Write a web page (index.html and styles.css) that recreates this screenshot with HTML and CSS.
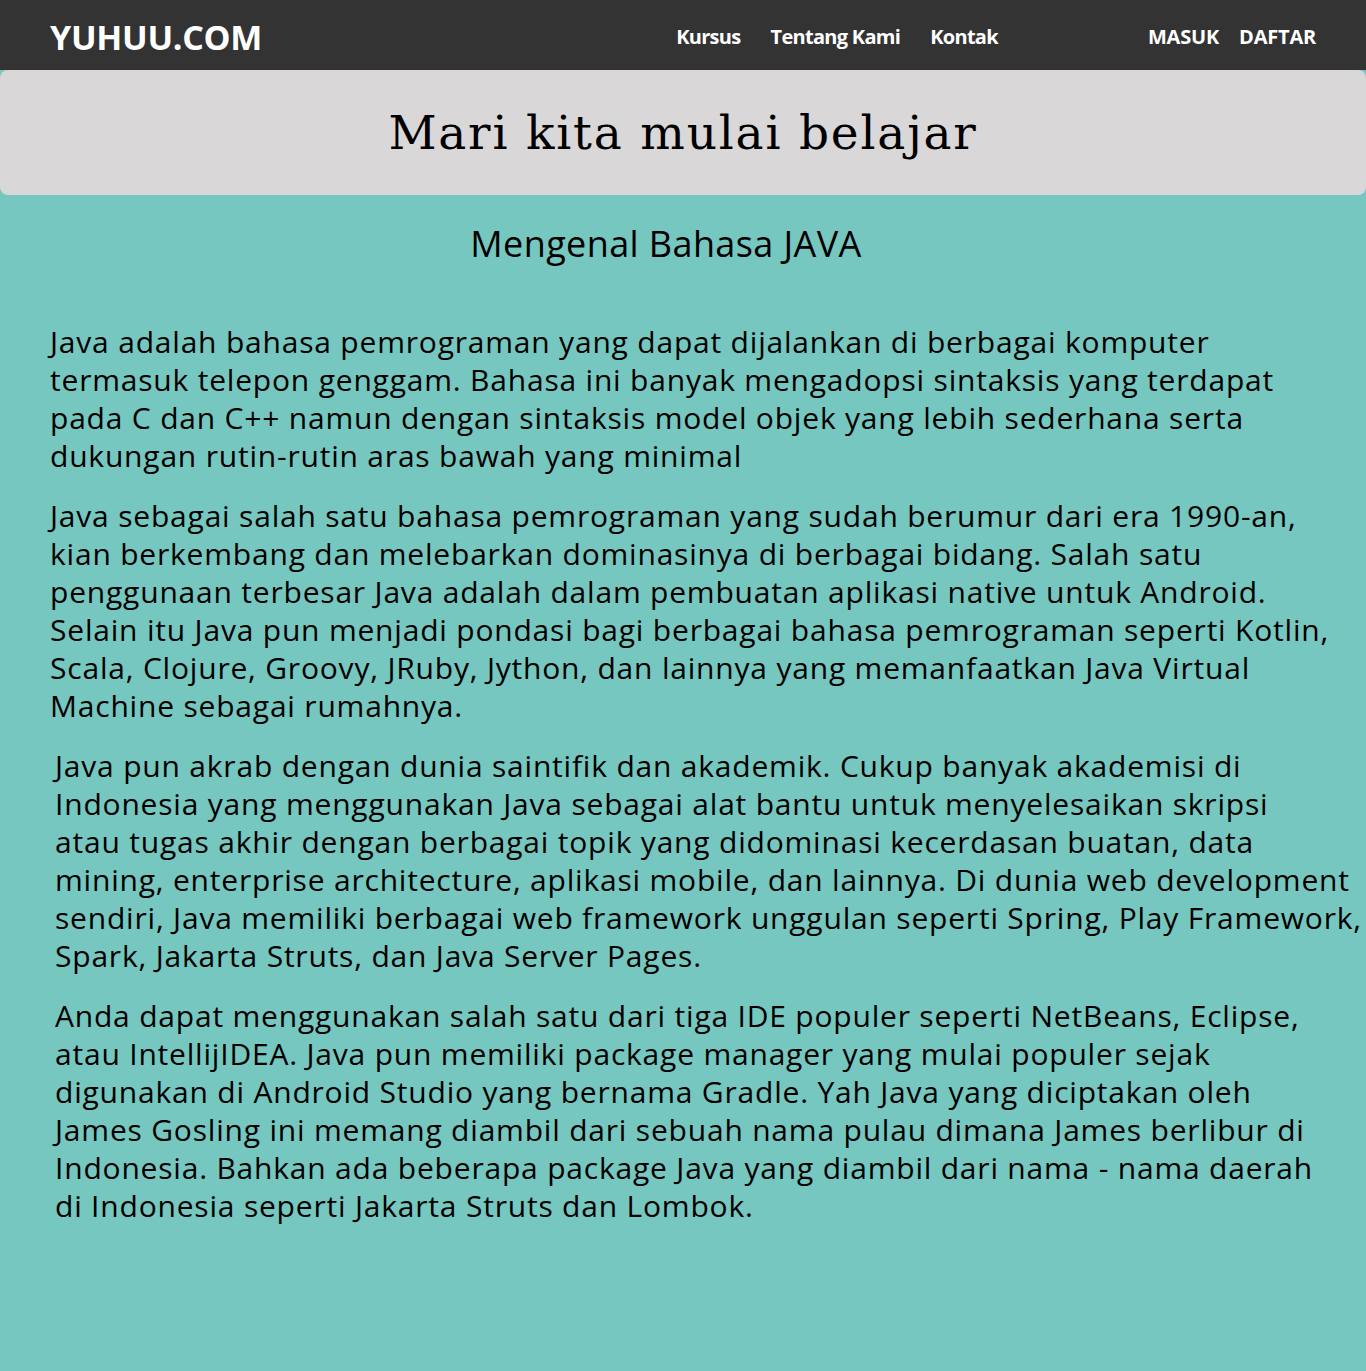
FILE: index.html
```html
<!DOCTYPE html>
<html lang="id">
<head>
<meta charset="utf-8">
<title>YUHUU.COM</title>
<link rel="stylesheet" href="styles.css">
</head>
<body>
<nav class="topbar">
  <a class="logo" href="#">YUHUU.COM</a>
  <ul class="menu">
    <li><a href="#">Kursus</a></li>
    <li><a href="#">Tentang Kami</a></li>
    <li><a href="#">Kontak</a></li>
  </ul>
  <ul class="auth">
    <li><a href="#">MASUK</a></li>
    <li><a href="#">DAFTAR</a></li>
  </ul>
</nav>
<header class="hero">
  <h1>Mari kita mulai belajar</h1>
</header>
<main class="content">
  <h2 class="title">Mengenal Bahasa JAVA</h2>
  <p class="para">Java adalah bahasa pemrograman yang dapat dijalankan di berbagai komputer<br>termasuk telepon genggam. Bahasa ini banyak mengadopsi sintaksis yang terdapat<br>pada C dan C++ namun dengan sintaksis model objek yang lebih sederhana serta<br>dukungan rutin-rutin aras bawah yang minimal</p>
  <p class="para">Java sebagai salah satu bahasa pemrograman yang sudah berumur dari era 1990-an,<br>kian berkembang dan melebarkan dominasinya di berbagai bidang. Salah satu<br>penggunaan terbesar Java adalah dalam pembuatan aplikasi native untuk Android.<br>Selain itu Java pun menjadi pondasi bagi berbagai bahasa pemrograman seperti Kotlin,<br>Scala, Clojure, Groovy, JRuby, Jython, dan lainnya yang memanfaatkan Java Virtual<br>Machine sebagai rumahnya.</p>
  <p class="para para-indent">Java pun akrab dengan dunia saintifik dan akademik. Cukup banyak akademisi di<br>Indonesia yang menggunakan Java sebagai alat bantu untuk menyelesaikan skripsi<br>atau tugas akhir dengan berbagai topik yang didominasi kecerdasan buatan, data<br>mining, enterprise architecture, aplikasi mobile, dan lainnya. Di dunia web development<br>sendiri, Java memiliki berbagai web framework unggulan seperti Spring, Play Framework,<br>Spark, Jakarta Struts, dan Java Server Pages.</p>
  <p class="para para-indent">Anda dapat menggunakan salah satu dari tiga IDE populer seperti NetBeans, Eclipse,<br>atau IntellijIDEA. Java pun memiliki package manager yang mulai populer sejak<br>digunakan di Android Studio yang bernama Gradle. Yah Java yang diciptakan oleh<br>James Gosling ini memang diambil dari sebuah nama pulau dimana James berlibur di<br>Indonesia. Bahkan ada beberapa package Java yang diambil dari nama - nama daerah<br>di Indonesia seperti Jakarta Struts dan Lombok.</p>
</main>
</body>
</html>
```

FILE: styles.css
```css
* { box-sizing: border-box; }

html, body { overflow-x: hidden; }

body {
  margin: 0;
  background: #76c7c0;
  color: #000;
  font-family: "Open Sans", "Noto Sans", sans-serif;
}

a { color: inherit; text-decoration: none; }

.topbar {
  display: flex;
  align-items: center;
  height: 70px;
  padding: 3px 50px 0;
  background: #333333;
  color: #ffffff;
}

.logo {
  font-size: 34px;
  font-weight: 700;
  letter-spacing: -0.3px;
}

.menu, .auth {
  list-style: none;
  margin: 0;
  padding: 0;
  display: flex;
  font-size: 20px;
  font-weight: 700;
  letter-spacing: -0.7px;
}

.menu { margin-left: auto; gap: 30px; }
.auth { margin-left: 150px; gap: 20px; letter-spacing: -0.2px; }

.hero {
  height: 125px;
  background: #d9d7d8;
  border-radius: 8px;
  display: flex;
  align-items: center;
  justify-content: center;
}

.hero h1 {
  margin: 0;
  font-family: "DejaVu Serif", "Liberation Serif", serif;
  font-weight: 400;
  font-size: 47px;
  letter-spacing: 1.8px;
}

.content {
  padding: 0 0 120px 50px;
}

.title {
  margin: 27px 34px 0 -50px;
  text-align: center;
  font-size: 36px;
  font-weight: 500;
  line-height: 44px;
  letter-spacing: 0.4px;
}

.para {
  margin: 0 0 22px 0;
  font-size: 30px;
  font-weight: 500;
  line-height: 38px;
  letter-spacing: 0.8px;
  white-space: nowrap;
}

.title + .para { margin-top: 57px; }

.para-indent { margin-left: 5px; }
```
